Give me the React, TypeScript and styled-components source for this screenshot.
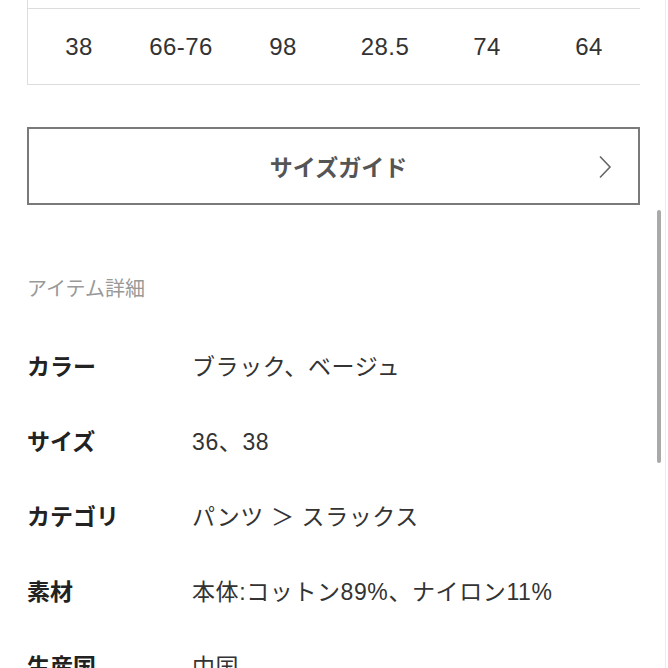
import styled, { createGlobalStyle } from 'styled-components';

const GlobalStyle = createGlobalStyle`
  * {
    box-sizing: border-box;
  }

  body {
    margin: 0;
    background: #ffffff;
    font-family: 'Liberation Sans', 'Noto Sans CJK JP', sans-serif;
    color: #222222;
  }
`;

const sizeRow = ['38', '66-76', '98', '28.5', '74', '64'];

const details = [
  { label: 'カラー', value: 'ブラック、ベージュ' },
  { label: 'サイズ', value: '36、38' },
  { label: 'カテゴリ', value: 'パンツ ＞ スラックス' },
  { label: '素材', value: '本体:コットン89%、ナイロン11%' },
  { label: '生産国', value: '中国' },
];

function App() {
  return (
    <>
      <GlobalStyle />
      <Page>
        <SizeTable>
          <HeaderSliver />
          <ValueRow>
            {sizeRow.map((v, i) => (
              <Cell key={i}>{v}</Cell>
            ))}
          </ValueRow>
        </SizeTable>

        <GuideButton>
          <span>サイズガイド</span>
          <Chevron width="14" height="24" viewBox="0 0 14 24">
            <path d="M2 1.5 L12 12 L2 22.5" fill="none" stroke="#666" strokeWidth="1.6" />
          </Chevron>
        </GuideButton>

        <SectionTitle>アイテム詳細</SectionTitle>

        <DetailList>
          {details.map(({ label, value }) => (
            <DetailRow key={label}>
              <Label>{label}</Label>
              <Value>{value}</Value>
            </DetailRow>
          ))}
        </DetailList>

        <ScrollThumb />
      </Page>
    </>
  );
}

export default App;

const Page = styled.div`
  position: relative;
  width: 666px;
  height: 668px;
  overflow: hidden;
  padding: 0 26px 0 27px;
  border-right: 1px solid #ececec;
`;

const SizeTable = styled.div`
  width: 613px;
  border-left: 1px solid #dddddd;
  border-bottom: 1px solid #dddddd;
`;

const HeaderSliver = styled.div`
  height: 9px;
  border-bottom: 1px solid #dddddd;
`;

const ValueRow = styled.div`
  display: grid;
  grid-template-columns: repeat(6, 1fr);
  height: 75px;
  align-items: center;
`;

const Cell = styled.div`
  text-align: center;
  font-size: 24px;
  letter-spacing: 0.4px;
  color: #333333;
`;

const GuideButton = styled.div`
  position: relative;
  display: flex;
  align-items: center;
  justify-content: center;
  width: 613px;
  height: 78px;
  margin-top: 42px;
  border: 2px solid #7a7a7a;
  font-size: 23px;
  font-weight: 700;
  color: #555555;
  padding-left: 10px;
`;

const Chevron = styled.svg`
  position: absolute;
  right: 26px;
  top: 26px;
`;

const SectionTitle = styled.div`
  margin-top: 71px;
  font-size: 20px;
  line-height: 26px;
  color: #999999;
`;

const DetailList = styled.div`
  margin-top: 25px;
`;

const DetailRow = styled.div`
  display: flex;
  align-items: center;
  height: 75px;
`;

const Label = styled.div`
  width: 165px;
  flex-shrink: 0;
  font-size: 23px;
  font-weight: 700;
  color: #222222;
`;

const Value = styled.div`
  font-size: 23px;
  color: #333333;
  letter-spacing: 0.6px;
`;

const ScrollThumb = styled.div`
  position: absolute;
  left: 657px;
  top: 210px;
  width: 4px;
  height: 253px;
  border-radius: 2px;
  background: #a9a9a9;
`;
